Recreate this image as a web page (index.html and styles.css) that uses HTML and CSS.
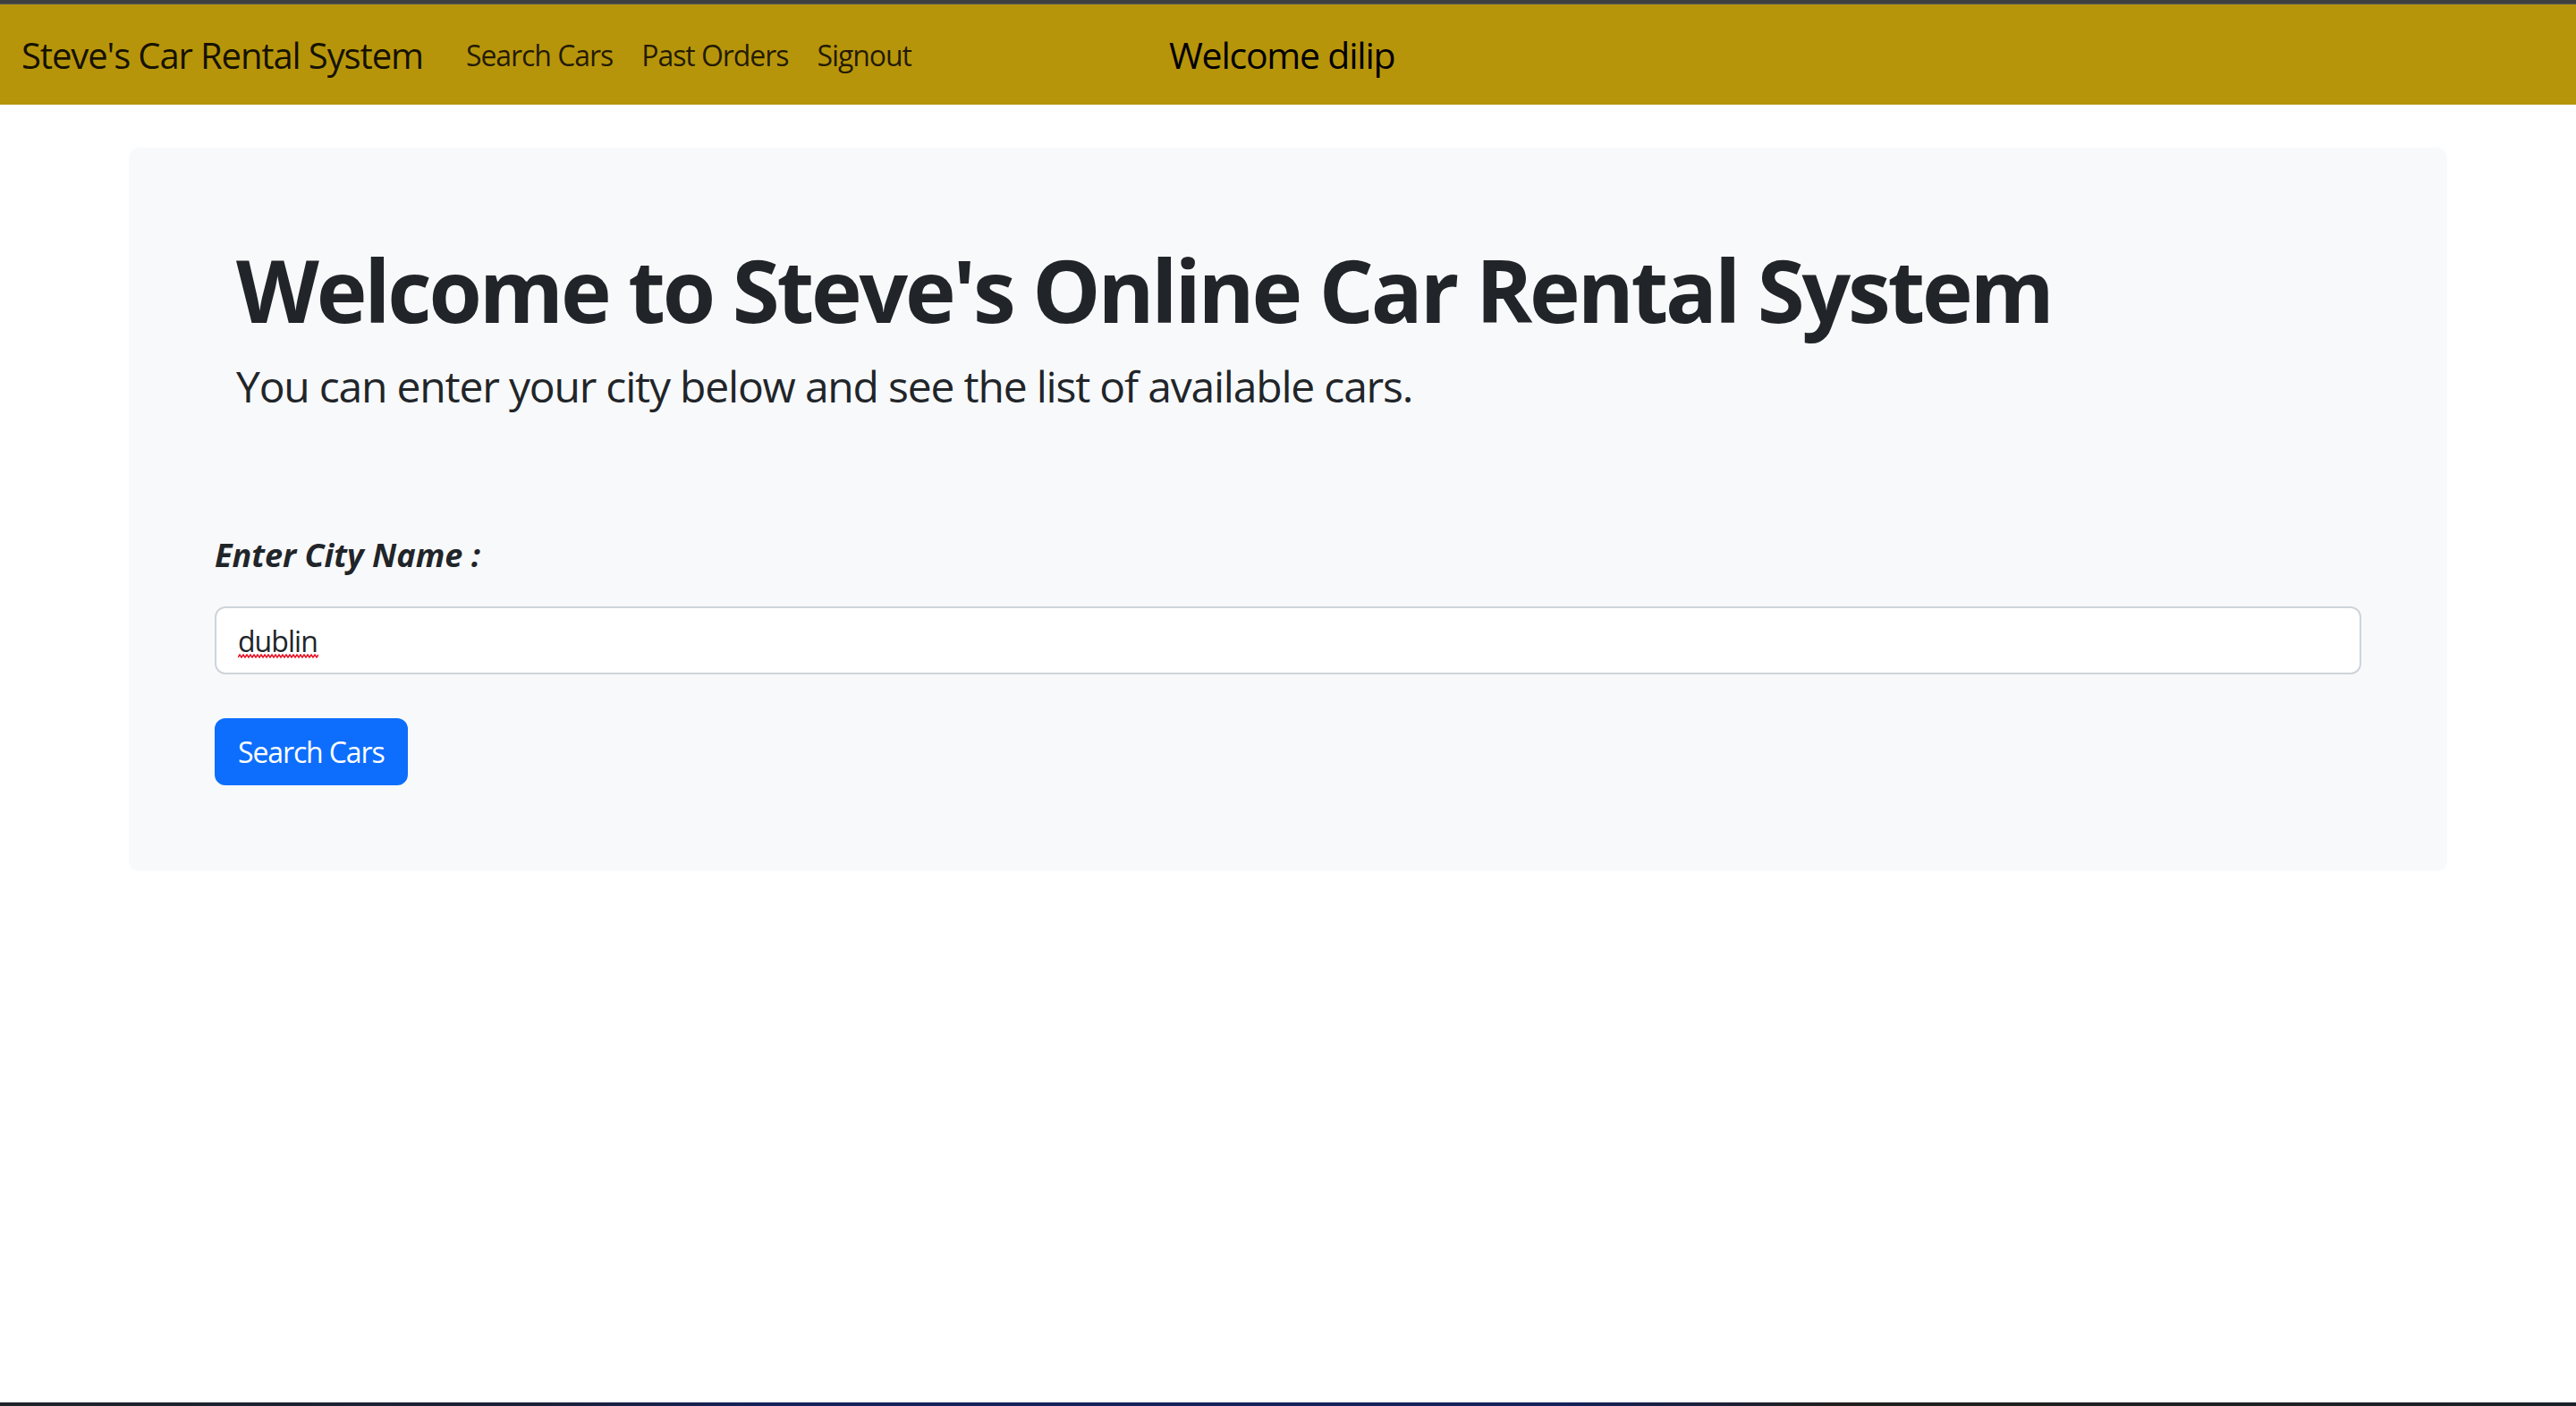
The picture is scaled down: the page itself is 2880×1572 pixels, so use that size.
FILE: index.html
```html
<!DOCTYPE html>
<html lang="en">
<head>
<meta charset="utf-8">
<title>Steve's Car Rental System</title>
<link rel="stylesheet" href="styles.css">
</head>
<body>
<div class="frame-top"></div>
<nav class="navbar">
  <a class="brand" href="#">Steve's Car Rental System</a>
  <ul class="nav-links">
    <li><a href="#">Search Cars</a></li>
    <li><a href="#">Past Orders</a></li>
    <li><a href="#">Signout</a></li>
  </ul>
  <span class="welcome">Welcome dilip</span>
</nav>
<main class="page">
  <div class="container">
    <section class="jumbo">
      <div class="intro">
        <h1 class="display">Welcome to Steve's Online Car Rental System</h1>
        <p class="lead">You can enter your city below and see the list of available cars.</p>
      </div>
      <form class="search-form">
        <label class="city-label" for="city">Enter City Name :</label>
        <input class="form-control" id="city" type="text" value="dublin">
        <button class="btn-primary" type="button">Search Cars</button>
      </form>
    </section>
  </div>
</main>
<div class="frame-bottom"></div>
</body>
</html>
```

FILE: styles.css
```css
* { box-sizing: border-box; }

html, body {
  margin: 0;
  padding: 0;
  height: 100%;
}

body {
  display: flex;
  flex-direction: column;
  min-height: 1572px;
  background: #ffffff;
  font-family: "Open Sans", "Noto Sans", sans-serif;
  color: #212529;
}

.frame-top {
  height: 5px;
  background: #3f3f3f;
  border-bottom: 1px solid #5c5c5c;
  flex: none;
}

.navbar {
  flex: none;
  height: 112px;
  background: #b7950b;
  display: flex;
  align-items: center;
  padding: 0 24px;
}

.brand {
  font-size: 40px;
  color: rgba(0, 0, 0, 0.9);
  text-decoration: none;
  margin-right: 32px;
  letter-spacing: -0.028em;
  white-space: nowrap;
}

.nav-links {
  list-style: none;
  display: flex;
  margin: 0;
  padding: 0;
}

.nav-links a {
  display: block;
  padding: 0 16px;
  font-size: 32px;
  color: rgba(0, 0, 0, 0.82);
  text-decoration: none;
  letter-spacing: -0.033em;
  white-space: nowrap;
}

.welcome {
  margin-left: 272px;
  font-size: 41px;
  color: #000;
  letter-spacing: -0.03em;
  white-space: nowrap;
}

.page {
  flex: 1;
}

.container {
  width: 2640px;
  margin: 0 auto;
  padding: 0 24px;
}

.jumbo {
  margin-top: 48px;
  background: #f8f9fa;
  border-radius: 12px;
  padding: 96px;
  display: flex;
  flex-direction: column;
}

.intro {
  padding: 5px 24px 0;
}

.display {
  margin: 0 0 15px;
  font-size: 96px;
  font-weight: 700;
  line-height: 1.2;
  letter-spacing: -0.033em;
  color: #212529;
}

.lead {
  margin: 0;
  font-size: 48px;
  line-height: 1.5;
  letter-spacing: -0.025em;
  color: #212529;
}

.search-form {
  margin-top: 129px;
  display: flex;
  flex-direction: column;
  align-items: flex-start;
}

.city-label {
  font-size: 36px;
  line-height: 48px;
  font-weight: 700;
  font-style: italic;
  letter-spacing: 0;
  color: #212529;
  margin-bottom: 33px;
}

.form-control {
  width: 100%;
  height: 76px;
  border: 2px solid #ced4da;
  border-radius: 12px;
  background-color: #fff;
  background-image: url("data:image/svg+xml,%3Csvg xmlns='http://www.w3.org/2000/svg' width='90' height='5' viewBox='0 0 90 5'%3E%3Cpath d='M0 4 L2 1 L4 4 L6 1 L8 4 L10 1 L12 4 L14 1 L16 4 L18 1 L20 4 L22 1 L24 4 L26 1 L28 4 L30 1 L32 4 L34 1 L36 4 L38 1 L40 4 L42 1 L44 4 L46 1 L48 4 L50 1 L52 4 L54 1 L56 4 L58 1 L60 4 L62 1 L64 4 L66 1 L68 4 L70 1 L72 4 L74 1 L76 4 L78 1 L80 4 L82 1 L84 4 L86 1 L88 4 L90 1' fill='none' stroke='%23e81123' stroke-width='1.5'/%3E%3C/svg%3E");
  background-repeat: no-repeat;
  background-position: 24px 51px;
  padding: 0 24px;
  font-family: inherit;
  font-size: 32px;
  color: #212529;
  letter-spacing: -0.03em;
  margin: 0 0 49px;
  outline: none;
}

.btn-primary {
  height: 75px;
  padding: 0 24px;
  border: 2px solid #0d6efd;
  border-radius: 12px;
  background: #0d6efd;
  color: #fff;
  font-family: inherit;
  font-size: 32px;
  letter-spacing: -0.035em;
  cursor: pointer;
}

.frame-bottom {
  flex: none;
  height: 4px;
  background: linear-gradient(90deg, #1e2229 0px, #1b2038 600px, #14215a 850px, #14215a 1750px, #221f1e 2050px, #1b2129 2880px);
}
```
